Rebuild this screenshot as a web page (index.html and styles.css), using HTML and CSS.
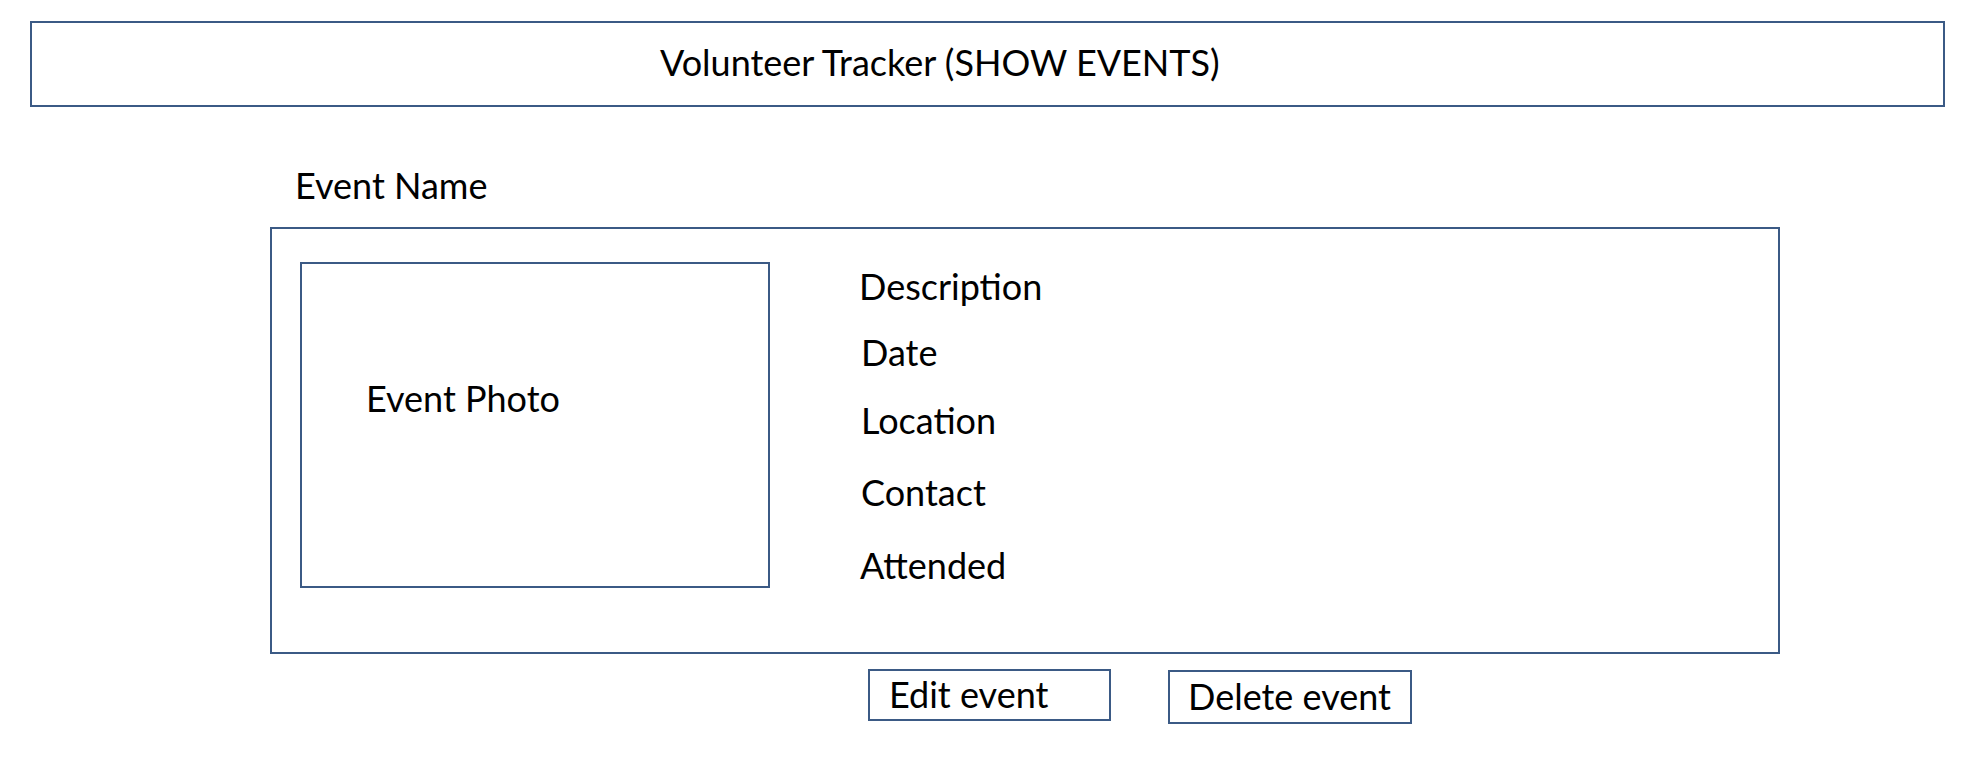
FILE: index.html
```html
<!DOCTYPE html>
<html lang="en">
<head>
<meta charset="utf-8">
<title>Volunteer Tracker (SHOW EVENTS)</title>
<link rel="stylesheet" href="styles.css">
</head>
<body>
<header class="topbar">
  <h1 class="topbar-title">Volunteer Tracker (SHOW EVENTS)</h1>
</header>
<main class="event">
  <h2 class="event-name">Event Name</h2>
  <section class="card">
    <div class="photo"><span class="photo-label">Event Photo</span></div>
    <ul class="details">
      <li class="detail">Description</li>
      <li class="detail">Date</li>
      <li class="detail">Location</li>
      <li class="detail">Contact</li>
      <li class="detail">Attended</li>
    </ul>
  </section>
  <div class="actions">
    <button class="btn btn-edit" type="button">Edit event</button>
    <button class="btn btn-delete" type="button">Delete event</button>
  </div>
</main>
</body>
</html>
```
FILE: styles.css
```css
* { box-sizing: border-box; }

html, body {
  margin: 0;
  padding: 0;
  background: #ffffff;
}

body {
  font-family: "Lato", "Liberation Sans", sans-serif;
  font-size: 36px;
  color: #000000;
  width: 1980px;
  height: 776px;
  overflow: hidden;
}

.topbar {
  margin: 21px 35px 0 30px;
  height: 86px;
  border: 2px solid #3b5a85;
  display: flex;
  align-items: center;
  padding: 0 0 4px 628px;
}

.topbar-title {
  margin: 0;
  font-size: inherit;
  font-weight: 400;
  line-height: 40px;
}

.event {
  padding-left: 270px;
}

.event-name {
  margin: 58px 0 22px 25px;
  font-size: inherit;
  font-weight: 400;
  line-height: 40px;
}

.card {
  width: 1510px;
  height: 427px;
  border: 2px solid #3b5a85;
  padding: 33px 0 0 28px;
  display: flex;
  align-items: flex-start;
}

.photo {
  width: 470px;
  height: 326px;
  border: 2px solid #3b5a85;
  padding: 114px 0 0 64px;
  flex: none;
}

.photo-label {
  display: block;
  line-height: 40px;
}

.details {
  list-style: none;
  margin: 4px 0 0 89px;
  padding: 0;
  display: flex;
  flex-direction: column;
}

.detail {
  line-height: 40px;
  padding-left: 2px;
}

.detail:first-child { padding-left: 0; }
.detail:nth-child(2) { margin-top: 26px; }
.detail:nth-child(3) { margin-top: 28px; }
.detail:nth-child(4) { margin-top: 32px; }
.detail:nth-child(5) { margin-top: 33px; padding-left: 1px; }

.actions {
  display: flex;
  align-items: flex-start;
  gap: 57px;
  margin: 15px 0 0 598px;
}

.btn {
  font: inherit;
  color: #000000;
  background: #ffffff;
  border: 2px solid #3b5a85;
  border-radius: 0;
  width: 243px;
  height: 52px;
  padding: 0 0 3px 19px;
  text-align: left;
  line-height: 40px;
}

.btn-delete {
  margin-top: 1px;
  width: 244px;
  height: 54px;
  padding-left: 18px;
}
```
